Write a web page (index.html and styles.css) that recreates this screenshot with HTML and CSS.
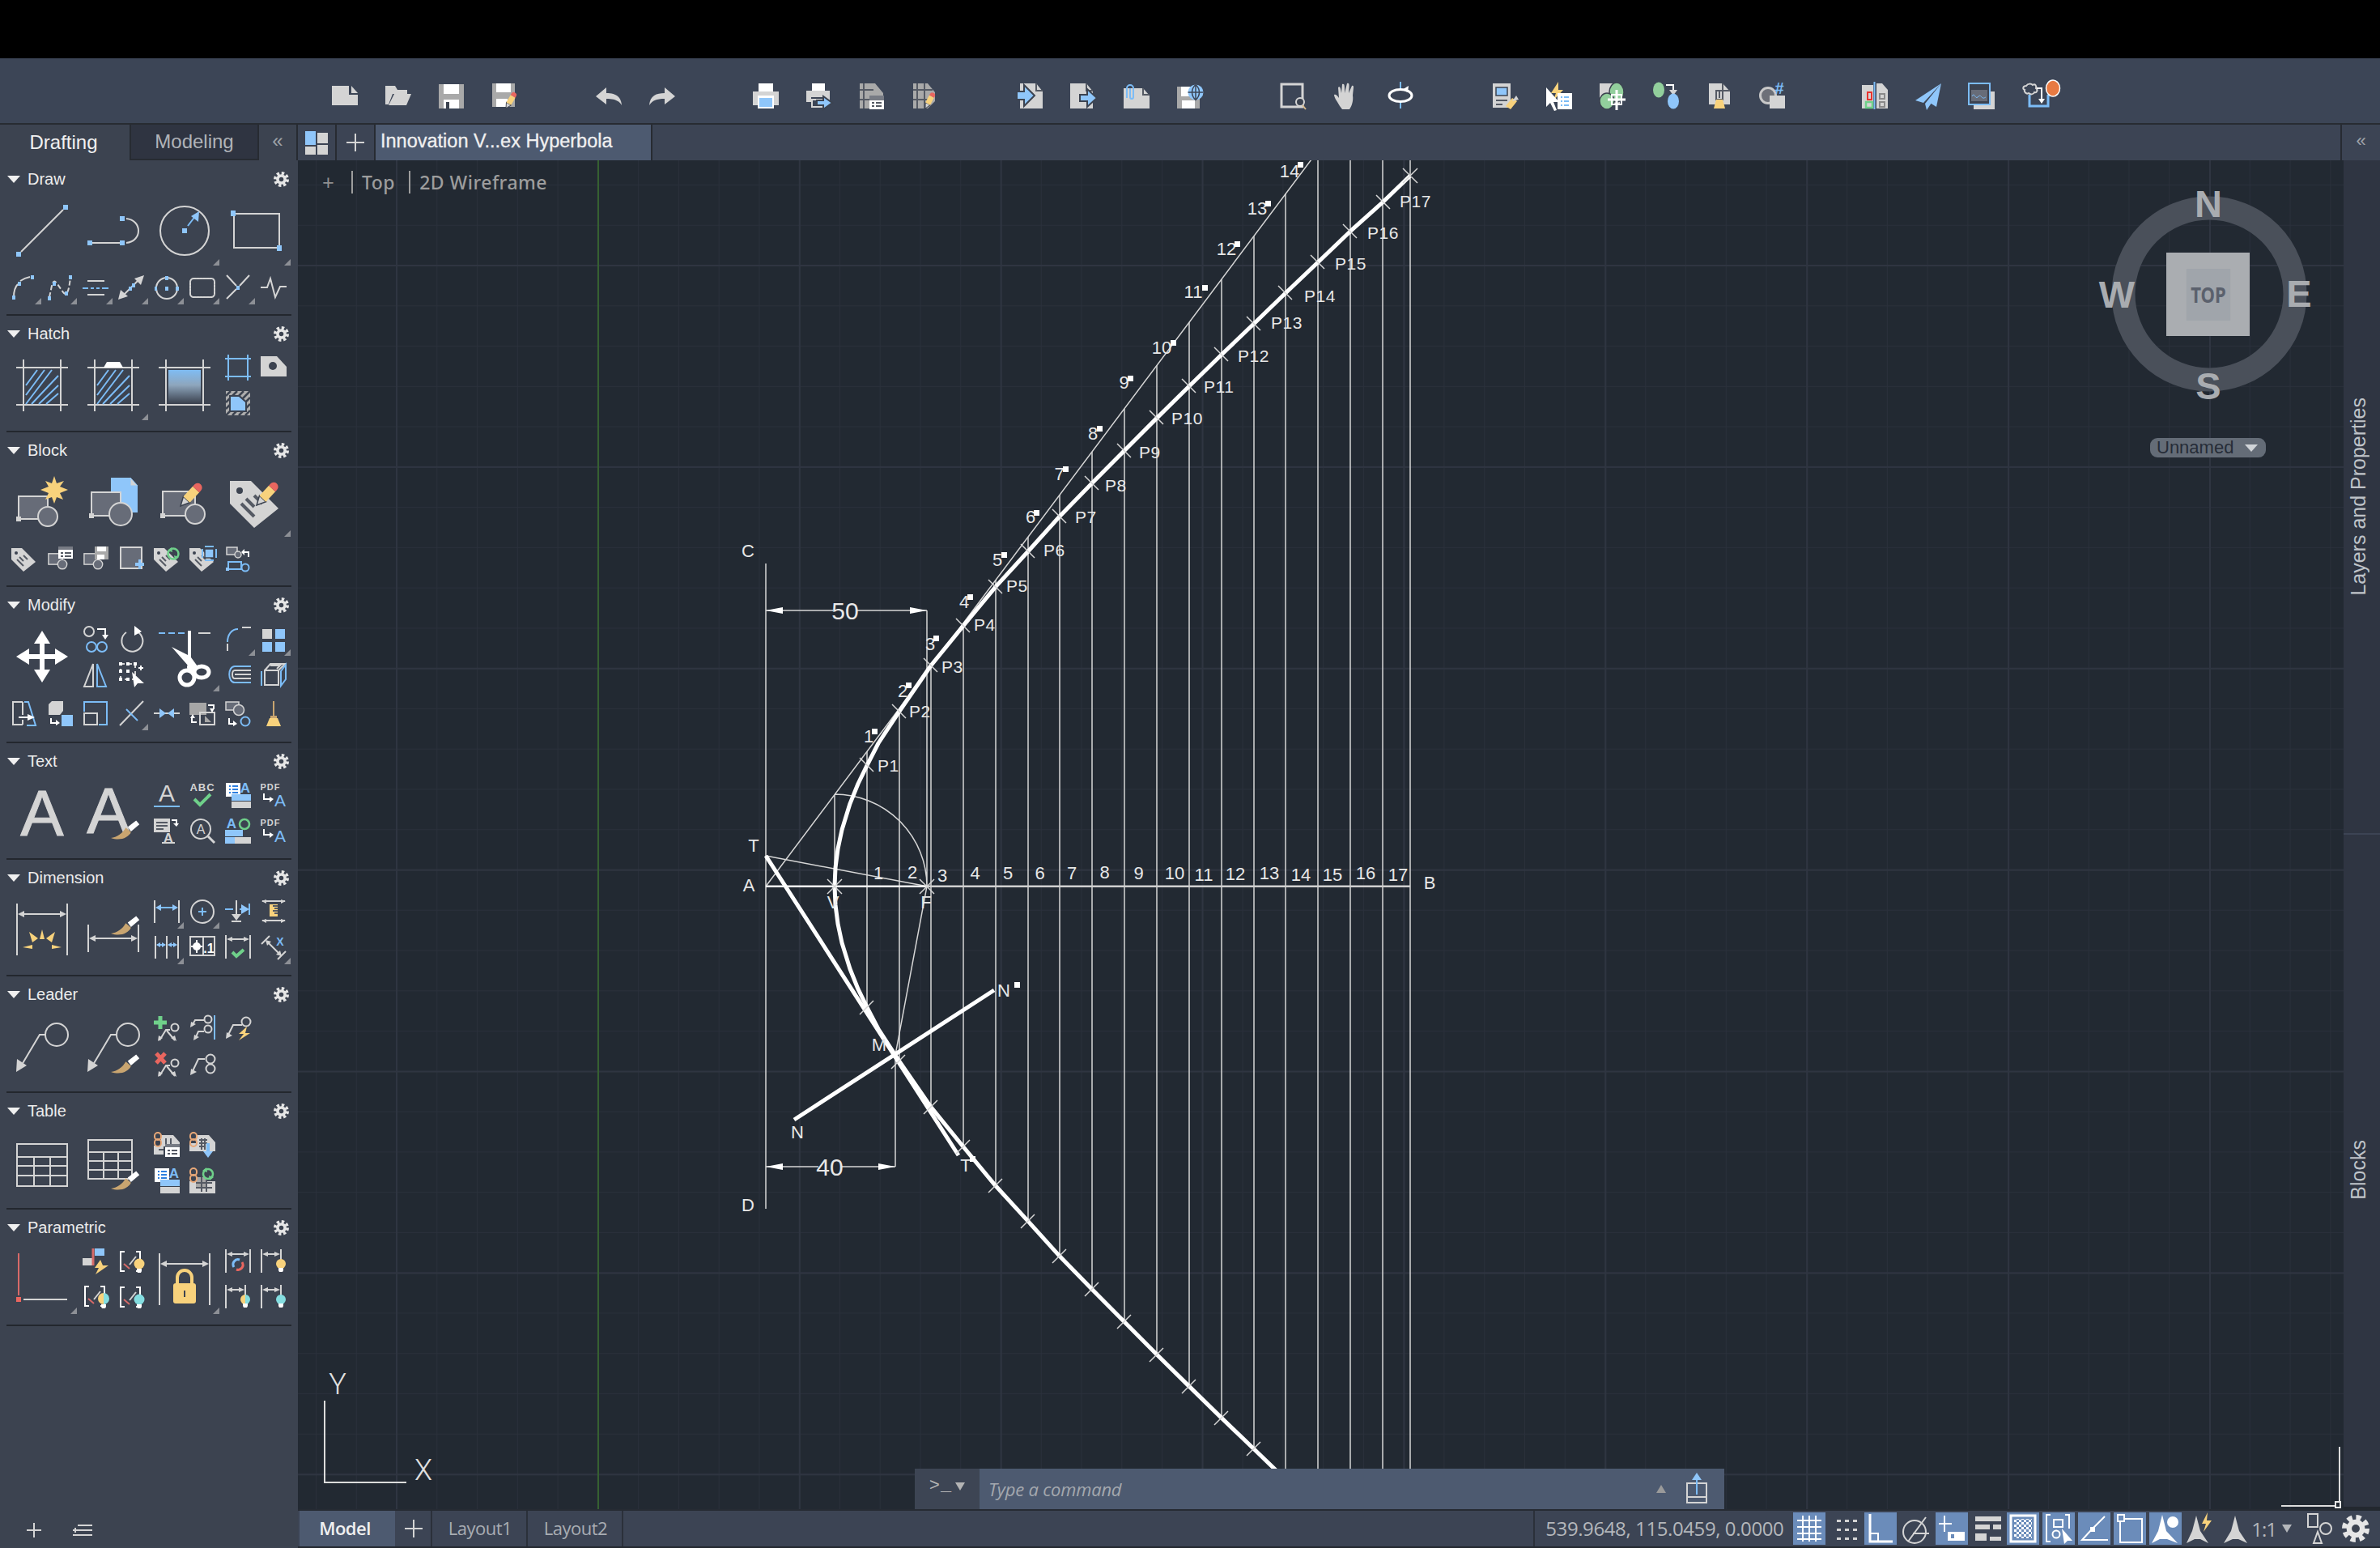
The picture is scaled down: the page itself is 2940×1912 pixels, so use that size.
FILE: index.html
```html
<!DOCTYPE html>
<html lang="en">
<head>
<meta charset="utf-8">
<title>Innovation Vertex Hyperbola</title>
<link rel="stylesheet" href="styles.css">
</head>
<body>
<svg class="defs" aria-hidden="true">
  <defs>
    <linearGradient id="grad" x1="0" y1="0" x2="0" y2="1"><stop offset="0" stop-color="#7fbcf3"/><stop offset=".45" stop-color="#8ea6bd"/><stop offset="1" stop-color="#3c4350"/></linearGradient>
    <pattern id="chk" width="6" height="6" patternUnits="userSpaceOnUse"><rect width="6" height="6" fill="#6b8cba"/><rect width="3" height="3" fill="#fff"/><rect x="3" y="3" width="3" height="3" fill="#fff"/></pattern>
    <g id="gear"><circle cx="9" cy="9" r="6" class="gf"/><circle cx="9" cy="9" r="7" class="gt"/><circle cx="9" cy="9" r="2.6" class="fd"/></g>
    <g id="pencil"><polygon points="0,0 11,-5.5 11,5.5" class="f kd"/><rect x="11" y="-5.5" width="17" height="11" class="fy"/><path d="M28-5.5h3a5.500 5.500 0 0 1 0 11h-3z" class="fr"/></g>
    <g id="brush"><path d="M0 0C9-1 18-7 23-16l8 7C27 0 14 5 0 0z" class="ft"/><path d="M26-17L39-27l5 6L31-10z" class="fw"/></g>
    <g id="tag"><polygon points="0,3 13,3 30,20 15,32 0,17" class="f"/><circle cx="6" cy="9" r="2" class="fd"/><path d="M10 14l5 5M7 17l8 8M15 12l5 5" class="sd"/></g>
    <g id="blk"><rect x="2" y="4" width="18" height="14" class="fm s1"/><circle cx="20" cy="18" r="6" class="fm s1"/></g>
    <g id="cstr"><path d="M8 4H3V28H8M22 4H27V28H22" class="sw"/><path d="M7 19L14 25" class="srd"/><path d="M14 20L22 10" class="s"/></g>
    <g id="chain"><rect x="1" y="1" width="8" height="9" rx="4" class="sor"/><rect x="1" y="9" width="8" height="9" rx="4" class="sor"/></g>
  </defs>
</svg>

<div class="topbar"></div>

<header class="toolbar">
  <div class="tgroup g1">
    <svg class="ti" viewBox="0 0 32 32"><path d="M0 5H21V16H32V29H0z" class="f"/><path d="M24 5l8 9h-8z" class="f"/></svg>
    <svg class="ti" viewBox="0 0 32 32"><path d="M0 5h12l3 5h12v5H9L4 28H0z" class="f"/><path d="M11 15h21l-6 14H4z" class="f"/></svg>
    <svg class="ti" viewBox="0 0 32 32"><path d="M0 3H31V33H0z" class="fg2"/><rect x="6" y="3" width="19" height="12" class="fw"/><rect x="6" y="22" width="19" height="11" class="fw"/><rect x="9" y="25" width="4" height="8" class="fd"/></svg>
    <svg class="ti" viewBox="0 0 32 32"><path d="M0 2H28V31H0z" class="fg2"/><rect x="5" y="2" width="18" height="11" class="fw"/><rect x="5" y="21" width="14" height="10" class="fw"/><use href="#pencil" transform="translate(17 33) rotate(-60) scale(.62)"/></svg>
  </div>
  <div class="tgroup g2">
    <svg class="ti" viewBox="0 0 32 32"><path d="M0 18L13 7v7c10 0 18 3 19 15-4-6-9-8-19-8v7z" class="f"/></svg>
    <svg class="ti" viewBox="0 0 32 32"><path d="M32 18L19 7v7C9 14 1 17 0 29c4-6 9-8 19-8v7z" class="f"/></svg>
  </div>
  <div class="tgroup g3">
    <svg class="ti" viewBox="0 0 32 32"><rect x="7" y="2" width="18" height="11" class="fw"/><path d="M0 12H32V29H26V22H6V29H0z" class="f"/><rect x="6" y="17" width="20" height="16" class="fw"/><rect x="8" y="20" width="16" height="11" class="fb"/></svg>
    <svg class="ti" viewBox="0 0 32 32"><rect x="7" y="2" width="16" height="9" class="fw"/><path d="M0 11H29V25H23V19H6V25H0z" class="f"/><rect x="7" y="22" width="12" height="9" class="s"/><path d="M13 23h8v-5l11 8-11 8v-5h-8z" class="fb kp"/></svg>
    <svg class="ti" viewBox="0 0 32 32"><path d="M0 2H19L29 14V20H17V33H0z" class="fg2"/><path d="M5 2V33M0 10H17M0 22H17" class="sd"/><rect x="12" y="17" width="18" height="16" class="fg3"/><rect x="12" y="23" width="18" height="11" class="fw"/><path d="M15 26h3M20 26h7M15 30h3M20 30h7" class="sd"/></svg>
    <svg class="ti" viewBox="0 0 32 32"><path d="M0 2H18L27 13V24L18 33H0z" class="fg2"/><path d="M5 2V33M0 10H24M0 22H20M14 2V33" class="sd"/><use href="#pencil" transform="translate(15 33) rotate(-62) scale(.6)"/></svg>
  </div>
  <div class="tgroup g4">
    <svg class="ti" viewBox="0 0 32 32"><path d="M4 2H24L32 12V33H4z" class="f"/><path d="M24 2v9h8" class="sd"/><path d="M0 12H9V4L22 17L9 30V22H0z" class="fb kp"/></svg>
    <svg class="ti" viewBox="0 0 32 32"><path d="M0 2H20L28 12V33H0z" class="f"/><path d="M20 2v9h8" class="sd"/><path d="M12 16H21V9L33 20L21 31V24H12z" class="fb kp"/></svg>
    <svg class="ti" viewBox="0 0 32 32"><path d="M0 8H24L32 17V33H0z" class="f"/><path d="M24 8v8h8" class="sd"/><path d="M4 20V8a4 4 0 0 1 8 0v11a2 2 0 0 1-4 0V8" class="sb"/></svg>
    <svg class="ti" viewBox="0 0 32 32"><path d="M0 6H28V33H0z" class="fg2"/><rect x="5" y="6" width="12" height="12" class="fw"/><rect x="6" y="23" width="16" height="10" class="fw"/><circle cx="23" cy="13" r="9.500" class="fb"/><path d="M23 3.500V22.500M13.500 13H32.500M23 3.500C17 9 17 17 23 22.500C29 17 29 9 23 3.500" class="sd1"/></svg>
  </div>
  <div class="tgroup g5">
    <svg class="ti" viewBox="0 0 32 32"><rect x="1" y="3" width="26" height="28" class="s3"/><circle cx="24" cy="25" r="5" class="s fd"/><path d="M27 29l4 5" class="sy"/></svg>
    <svg class="ti" viewBox="0 0 32 32"><path d="M7 30C5 26 0 20 0 16c2-1 4 1 6 4L5 7c2-2 3 0 4 7L10 3c3-1 3 1 3 11l3-12c3-1 3 1 2 12l4-9c3-1 2 2 1 12 1 6-1 13-4 17H10z" class="f"/></svg>
    <svg class="ti" viewBox="0 0 32 32"><path d="M16 0V9M16 24V33" class="sb"/><ellipse cx="16" cy="17" rx="14" ry="7.500" class="s3w"/><polygon points="18,10 26,5 25,13" class="fw"/></svg>
  </div>
  <div class="tgroup g6">
    <svg class="ti" viewBox="0 0 32 32"><rect x="0" y="2" width="22" height="30" class="f"/><rect x="4" y="7" width="14" height="10" class="fb kd"/><path d="M4 23h14M4 28h8" class="sd"/><path d="M16 30l8-10 6 4-8 10z" class="fy"/><path d="M24 24l5-7 3 5z" class="f"/></svg>
    <svg class="ti" viewBox="0 0 32 32"><path d="M15 0L6 14h6l-3 9 12-13h-6z" class="fy"/><path d="M0 7L16 25H9l4 10-3 1-5-10-5 5z" class="fw"/><rect x="14" y="14" width="18" height="20" class="fw"/><path d="M18 19h2M22 19h6M18 24h2M22 24h6M18 29h2M22 29h6" class="sb"/></svg>
    <svg class="ti" viewBox="0 0 32 32"><rect x="0" y="2" width="25" height="26" class="f"/><ellipse cx="21" cy="13" rx="9" ry="12" class="gg kd"/><ellipse cx="9" cy="24" rx="9" ry="10" class="gg kd"/><path d="M21 10V35M10 22H32" class="sw3"/><rect x="15" y="16" width="12" height="12" class="sw"/></svg>
    <svg class="ti" viewBox="0 0 32 32"><ellipse cx="7" cy="10" rx="7" ry="9.500" class="gg"/><path d="M16 4H25V11" class="sw"/><polygon points="20,10 30,10 25,17" class="f"/><ellipse cx="25" cy="24" rx="7" ry="9.500" class="fb"/></svg>
    <svg class="ti" viewBox="0 0 26 32"><path d="M0 2H17L26 12V28H0z" class="f"/><path d="M17 2v9h9" class="sd"/><path d="M9 11H17V22H9z" class="sd"/><path d="M13 10V20" class="sd"/><polygon points="9,22 17,22 20,33 6,33" class="fy"/></svg>
    <svg class="ti" viewBox="0 0 32 32"><circle cx="10" cy="17" r="9.500" class="s3g"/><rect x="12" y="17" width="19" height="16" class="f"/><text x="24" y="15" class="hash">#</text></svg>
  </div>
  <div class="tgroup g7">
    <svg class="ti" viewBox="0 0 32 32"><path d="M0 4H14V33H0z" class="f"/><path d="M18 2H25L32 10V33H18z" class="f"/><rect x="7" y="13" width="5" height="9" class="srb"/><rect x="5" y="25" width="8" height="7" class="sgn"/><rect x="22" y="15" width="6" height="6" class="s0"/><rect x="22" y="25" width="6" height="6" class="s0"/><path d="M15.500 0V34" class="sb"/></svg>
    <svg class="ti" viewBox="0 0 32 32"><path d="M32 2L0 23l10 3z" class="fb"/><path d="M32 2L12 27l2 8 6-9z" class="fb"/><path d="M32 2L18 26l8 5z" class="fb"/></svg>
    <svg class="ti" viewBox="0 0 32 32"><rect x="6" y="12" width="26" height="22" class="f"/><rect x="0" y="2" width="26" height="26" class="fd1 sb"/><rect x="3" y="10" width="20" height="14" class="fm"/><path d="M4 18c3-6 4 4 7 1s3-2 5 0 3 1 5 0" class="sb1"/></svg>
    <svg class="ti wide" viewBox="0 0 48 36"><path d="M5 7c2-3 6-3 8-1 3-2 5 1 4 4 3 2 1 6-2 5-1 3-5 3-7 1-3 2-6-2-5-4-3-1-2-5 2-5z" class="s"/><path d="M18 10H24V26" class="sw"/><polygon points="20,23 28,23 24,29" class="fw"/><path d="M9 18V32H32V18" class="sb3"/><ellipse cx="38" cy="10" rx="8.500" ry="10" class="orng"/></svg>
  </div>
</header>

<div class="main">
  <aside class="palette">
    <div class="pal-tabs">
      <div class="ptab on">Drafting</div>
      <div class="ptab off">Modeling</div>
      <div class="ptab chev">«</div>
    </div>
    <div class="pal-body">

      <section class="sec tall">
        <div class="head"><span class="tri"></span><span class="ttl">Draw</span><svg class="gear" viewBox="0 0 18 18"><use href="#gear"/></svg></div>
        <div class="grid">
          <div class="c L"><svg viewBox="0 0 64 64"><path d="M6 58L58 6" class="s"/><rect x="0" y="58" width="6" height="6" class="fb"/><rect x="58" y="0" width="6" height="6" class="fb"/></svg></div>
          <div class="c L"><svg viewBox="0 0 64 64"><path d="M6 47H40" class="s"/><path d="M48 17C68 19 68 45 48 47" class="s"/><rect x="0" y="44" width="6" height="6" class="fb"/><rect x="40" y="44" width="6" height="6" class="fb"/><rect x="40" y="14" width="6" height="6" class="fb"/></svg></div>
          <div class="c L fly"><svg viewBox="0 0 64 64"><circle cx="32" cy="32" r="30" class="s"/><rect x="29" y="29" width="6" height="6" class="fb"/><path d="M36 26L46 13" class="sb"/><polygon points="50,8 49,21 40,14" class="fb"/></svg></div>
          <div class="c L fly"><svg viewBox="0 0 64 64"><path d="M5 11H61V53H5z" class="s"/><rect x="1" y="7" width="6" height="7" class="fb"/><rect x="58" y="50" width="6" height="7" class="fb"/></svg></div>
        </div>
        <div class="grid one">
          <div class="c fly"><svg viewBox="0 0 32 32"><path d="M3 28C3 22 4 16 8 12M11 8C14 6 18 4 23 3" class="s"/><rect x="1" y="26" width="4" height="5" class="fb"/><rect x="8" y="9" width="4" height="5" class="fb"/><rect x="24" y="1" width="4" height="5" class="fb"/></svg></div>
          <div class="c fly"><svg viewBox="0 0 32 32"><path d="M3 28L6 14C8 6 10 8 13 12L20 22C25 28 27 20 29 4" class="s dash"/><rect x="1" y="27" width="4" height="5" class="fb"/><rect x="7" y="9" width="4" height="5" class="fb"/><rect x="22" y="21" width="4" height="5" class="fb"/><rect x="27" y="1" width="4" height="5" class="fb"/></svg></div>
          <div class="c fly"><svg viewBox="0 0 32 32"><path d="M6 8H27M6 25H27" class="s"/><path d="M0 17H7M10 17H14M17 17H21M24 17H32" class="sb"/></svg></div>
          <div class="c fly"><svg viewBox="0 0 32 32"><path d="M6 26L26 6" class="s"/><polygon points="0,31 3,19 12,27" class="f"/><polygon points="32,1 20,5 28,13" class="f"/><rect x="13" y="15" width="4" height="5" class="fb"/><rect x="17" y="11" width="4" height="5" class="fb"/></svg></div>
          <div class="c fly"><svg viewBox="0 0 32 32"><circle cx="16" cy="17" r="13" class="s"/><rect x="14" y="2" width="4" height="5" class="fb"/><rect x="14" y="15" width="4" height="5" class="fb"/><rect x="27" y="15" width="4" height="5" class="fb"/><rect x="1" y="15" width="3" height="5" class="fb"/></svg></div>
          <div class="c fly"><svg viewBox="0 0 32 32"><rect x="1" y="5" width="30" height="23" rx="4" class="s dot"/></svg></div>
          <div class="c fly"><svg viewBox="0 0 32 32"><path d="M2 1L14 14M30 1L18 14M14 18L2 30" class="s"/><rect x="14" y="14" width="4" height="5" class="fb"/></svg></div>
          <div class="c"><svg viewBox="0 0 32 32"><path d="M0 16H8L12 5L18 28L24 15H32" class="s"/></svg></div>
        </div>
      </section>

      <section class="sec short">
        <div class="head"><span class="tri"></span><span class="ttl">Hatch</span><svg class="gear" viewBox="0 0 18 18"><use href="#gear"/></svg></div>
        <div class="grid">
          <div class="c L"><svg viewBox="0 0 64 64"><path d="M0 10H64M0 56H64M9 0V64M55 0V64" class="s"/><path d="M12 32L26 13M12 44L35 13M12 55L44 13M19 55L52 20M28 55L52 32M37 55L52 42" class="sb"/></svg></div>
          <div class="c L fly"><svg viewBox="0 0 64 64"><path d="M0 10H64M0 56H64M9 0V64M55 0V64" class="s"/><path d="M12 32L26 13M12 44L35 13M12 55L44 13M19 55L52 20M28 55L52 32M37 55L52 42" class="sb"/><path d="M20 10L24 3H40L44 10z" class="fw"/></svg></div>
          <div class="c L"><svg viewBox="0 0 64 64"><rect x="12" y="13" width="40" height="41" fill="url(#grad)"/><path d="M0 10H64M0 56H64M9 0V64M55 0V64" class="s"/></svg></div>
          <div class="c"><svg viewBox="0 0 32 32"><path d="M0 5H32M0 27H32M4 0V32M28 0V32" class="sb"/></svg></div>
          <div class="c"><svg viewBox="0 0 32 32"><path d="M0 2H20L32 15V27H0z" class="f"/><ellipse cx="15" cy="14" rx="5" ry="5" class="fd"/></svg></div>
          <div class="c"><svg viewBox="0 0 32 32"><rect x="1" y="1" width="30" height="30" class="hatch"/><path d="M1 7L7 1M1 15L15 1M1 23L23 1M1 31L31 1M9 31L31 9M17 31L31 17M25 31L31 25" class="sstripe"/><path d="M5 6H18L27 14V27H5z" class="fd"/><path d="M7 8H17L25 15V25H7z" class="fb"/></svg></div>
        </div>
      </section>

      <section class="sec tall">
        <div class="head"><span class="tri"></span><span class="ttl">Block</span><svg class="gear" viewBox="0 0 18 18"><use href="#gear"/></svg></div>
        <div class="grid">
          <div class="c L"><svg viewBox="0 0 64 64"><rect x="3" y="25" width="36" height="28" class="fm s"/><circle cx="39" cy="50" r="12" class="fm s"/><rect x="0" y="50" width="6" height="6" class="f"/><polygon points="47,0 50,9 59,6 54,13 64,17 54,21 58,29 50,26 47,34 44,26 36,29 40,21 30,17 40,13 36,6 44,9" class="fy"/></svg></div>
          <div class="c L"><svg viewBox="0 0 64 64"><path d="M29 2H53L62 12V45H29z" class="fb"/><path d="M53 2L62 12H53z" class="fw1 kb2"/><rect x="5" y="20" width="36" height="29" class="fm s"/><circle cx="41" cy="47" r="14" class="fm s"/><rect x="2" y="46" width="6" height="6" class="f"/></svg></div>
          <div class="c L"><svg viewBox="0 0 64 64"><rect x="5" y="19" width="40" height="30" class="fm s"/><circle cx="45" cy="47" r="12" class="fm s"/><rect x="2" y="46" width="6" height="6" class="f"/><use href="#pencil" transform="translate(27 37) rotate(-47) scale(1)"/></svg></div>
          <div class="c L fly"><svg viewBox="0 0 64 64"><use href="#tag" transform="scale(2)"/><use href="#pencil" transform="translate(33 36) rotate(-47)"/></svg></div>
        </div>
        <div class="grid one">
          <div class="c"><svg viewBox="0 0 32 32"><use href="#tag"/></svg></div>
          <div class="c"><svg viewBox="0 0 32 32"><use href="#blk" transform="translate(0 6) scale(.95)"/><rect x="14" y="1" width="18" height="15" class="fw"/><rect x="14" y="1" width="18" height="4" class="fg3"/><path d="M17 9h3M22 9h8M17 13h3M22 13h8" class="sd"/></svg></div>
          <div class="c"><svg viewBox="0 0 32 32"><use href="#blk" transform="translate(0 6) scale(.95)"/><rect x="15" y="1" width="17" height="16" class="fg2"/><rect x="18" y="1" width="11" height="6" class="fw"/><rect x="18" y="11" width="9" height="6" class="fw"/></svg></div>
          <div class="c"><svg viewBox="0 0 32 32"><rect x="3" y="2" width="26" height="26" class="fm s"/><path d="M24 21H28V17H31V21H35V25H31V29H28V25H24z" class="fb" transform="translate(-3 0)"/></svg></div>
          <div class="c"><svg viewBox="0 0 32 32"><use href="#tag"/><circle cx="24" cy="10" r="6.500" class="sgn"/><polygon points="17,6 22,2 23,8" class="fn"/><polygon points="31,14 26,18 25,12" class="fn"/></svg></div>
          <div class="c"><svg viewBox="0 0 32 32"><use href="#tag"/><rect x="19" y="4" width="11" height="11" class="fb kd"/><path d="M16 4V15M33 4V15M19 1H30M19 18H30" class="sb"/></svg></div>
          <div class="c"><svg viewBox="0 0 32 32"><path d="M2 2H15V11H2z" class="fm s1"/><circle cx="16" cy="11" r="4" class="fm s1"/><path d="M22 8H29V14" class="sw"/><polygon points="20,8 24,4 24,12" class="fw"/><path d="M4 20H20V29H4z" class="sb"/><circle cx="25" cy="27" r="4.500" class="sb"/><rect x="1" y="27" width="4" height="4" class="fb"/></svg></div>
        </div>
      </section>

      <section class="sec tall mod">
        <div class="head"><span class="tri"></span><span class="ttl">Modify</span><svg class="gear" viewBox="0 0 18 18"><use href="#gear"/></svg></div>
        <div class="grid">
          <div class="c L"><svg viewBox="0 0 64 64"><path d="M32 0L42 16H35V29H48V22L64 32L48 42V35H35V48H42L32 64L22 48H29V35H16V42L0 32L16 22V29H29V16H22z" class="fw"/></svg></div>
          <div class="c"><svg viewBox="0 0 32 32"><circle cx="8" cy="7" r="6" class="s"/><path d="M18 4H28V12" class="sw"/><polygon points="24,11 32,11 28,17" class="fw"/><circle cx="11" cy="26" r="6" class="sb"/><circle cx="24" cy="26" r="6" class="sb"/></svg></div>
          <div class="c"><svg viewBox="0 0 32 32"><path d="M10 8A13 13 0 1 0 20 6" class="s"/><polygon points="20,0 29,7 20,12" class="fw"/></svg></div>
          <div class="c L fly"><svg viewBox="0 0 64 64"><path d="M0 3H32" class="sb dash2"/><path d="M49 3H64" class="s"/><path d="M16 20L44 52 48 44 40 33 40 0 36 0 36 30z" class="fw"/><circle cx="39" cy="45" r="4" class="fw"/><circle cx="35" cy="58" r="9" class="sw5"/><ellipse cx="53" cy="51" rx="9" ry="7" class="sw5"/></svg></div>
          <div class="c fly"><svg viewBox="0 0 32 32"><path d="M3 31V22" class="s"/><path d="M3 20C3 11 8 4 16 4" class="sb"/><path d="M21 2H32" class="s"/></svg></div>
          <div class="c fly"><svg viewBox="0 0 32 32"><rect x="2" y="4" width="12" height="12" class="f"/><rect x="18" y="4" width="12" height="12" class="fb"/><rect x="2" y="20" width="12" height="12" class="fb"/><rect x="18" y="20" width="12" height="12" class="fb"/></svg></div>
          <div class="c"><svg viewBox="0 0 32 32"><path d="M13 3V31H2z" class="s"/><path d="M18 3V31H29z" class="sb"/></svg></div>
          <div class="c"><svg viewBox="0 0 32 32"><rect x="3" y="3" width="18" height="19" class="s dash3"/><rect x="1" y="1" width="4" height="4" class="fw"/><rect x="10" y="1" width="4" height="4" class="fw"/><rect x="19" y="1" width="4" height="4" class="fw"/><rect x="1" y="10" width="4" height="4" class="fw"/><rect x="10" y="10" width="4" height="4" class="fw"/><rect x="1" y="20" width="4" height="4" class="fw"/><rect x="10" y="20" width="4" height="4" class="fw"/><path d="M17 13L32 27H24L20 32z" class="fw"/><path d="M25 8H31M28 5V11" class="sw"/></svg></div>
          <div class="c"><svg viewBox="0 0 32 32"><path d="M32 6H12C3 6 3 26 12 26H32" class="sb"/><path d="M32 11H12C8 11 8 21 12 21H32M12 16H32" class="s"/></svg></div>
          <div class="c"><svg viewBox="0 0 32 32"><rect x="5" y="11" width="17" height="18" class="s"/><path d="M5 11L12 3H30L22 11" class="s"/><path d="M12 5H24L20 9" class="s"/><path d="M1 12V30" class="sb"/><path d="M25 12V30L31 22V4z" class="sb"/></svg></div>
        </div>
        <div class="grid one">
          <div class="c"><svg viewBox="0 0 32 32"><path d="M14 2H2V30H14" class="s"/><path d="M14 2V18M14 24V30" class="s"/><path d="M16 2H21L30 31H19" class="sb"/><path d="M9 21H22" class="sw"/><polygon points="20,17 29,21 20,25" class="fw"/></svg></div>
          <div class="c"><svg viewBox="0 0 32 32"><path d="M2 5L6 1H20V13L16 18H2z" class="f"/><path d="M5 22V28H12" class="sw"/><polygon points="11,24 16,28 11,31" class="fw"/><rect x="18" y="18" width="14" height="14" class="fb"/></svg></div>
          <div class="c"><svg viewBox="0 0 32 32"><path d="M2 14V2H30V30H20" class="sb"/><rect x="2" y="16" width="16" height="14" class="s"/></svg></div>
          <div class="c fly"><svg viewBox="0 0 32 32"><path d="M2 31L31 1" class="s"/><path d="M10 11L24 25" class="sb"/></svg></div>
          <div class="c"><svg viewBox="0 0 32 32"><path d="M0 16H32" class="s"/><polygon points="7,10 15,16 7,22" class="fb"/><polygon points="25,10 17,16 25,22" class="fb"/></svg></div>
          <div class="c"><svg viewBox="0 0 32 32"><rect x="0" y="3" width="21" height="15" class="fg4"/><rect x="13" y="15" width="18" height="15" class="s"/><polygon points="19,19 27,27 19,27" class="fg4"/><path d="M23 6H30V11" class="sw"/><polygon points="25,10 31,10 28,15" class="fw"/><path d="M9 27H3V21" class="sw"/><polygon points="1,22 7,22 4,17" class="fw"/></svg></div>
          <div class="c"><svg viewBox="0 0 32 32"><path d="M1 2H17V12H1z" class="fm s1"/><circle cx="17" cy="12" r="6.500" class="fm s1"/><path d="M5 22V29H12" class="sw"/><polygon points="10,25 15,29 10,32" class="fw"/><circle cx="25" cy="26" r="5.500" class="sb"/></svg></div>
          <div class="c"><svg viewBox="0 0 32 32"><rect x="15" y="1" width="2" height="19" class="ft"/><rect x="12" y="19" width="8" height="3" class="ft"/><polygon points="11,22 21,22 25,32 7,32" class="fy"/></svg></div>
        </div>
      </section>

      <section class="sec short">
        <div class="head"><span class="tri"></span><span class="ttl">Text</span><svg class="gear" viewBox="0 0 18 18"><use href="#gear"/></svg></div>
        <div class="grid">
          <div class="c L"><svg viewBox="0 0 64 64"><text x="32" y="60" class="bigA">A</text></svg></div>
          <div class="c L"><svg viewBox="0 0 64 64"><text x="26" y="57" class="bigA">A</text><use href="#brush" transform="translate(29 63) scale(.8)"/></svg></div>
          <div class="c"><svg viewBox="0 0 32 32"><text x="16" y="24" class="medA">A</text><path d="M0 30H32" class="sb"/></svg></div>
          <div class="c"><svg viewBox="0 0 32 32"><text x="16" y="11" class="abc">ABC</text><path d="M6 21L13 28L26 15" class="sgn4"/></svg></div>
          <div class="c"><svg viewBox="0 0 32 32"><rect x="1" y="1" width="18" height="17" class="fw"/><path d="M5 5h2M9 5h7M5 9h2M9 9h7M5 13h2M9 13h7" class="sblue"/><text x="25" y="13" class="smA bl">A</text><rect x="8" y="15" width="24" height="8" class="fb"/><rect x="8" y="24" width="24" height="8" class="f"/></svg></div>
          <div class="c"><svg viewBox="0 0 32 32"><text x="12" y="10" class="pdf">PDF</text><path d="M4 14V21H13" class="sw"/><polygon points="11,18 16,21 11,25" class="fw"/><text x="24" y="30" class="smA2 bl">A</text></svg></div>
          <div class="c"><svg viewBox="0 0 32 32"><rect x="0" y="1" width="20" height="17" class="f"/><path d="M3 6H17M3 10H17M3 14H12" class="sd"/><path d="M22 3H28V8" class="sw"/><polygon points="24,7 31,7 28,11" class="fw"/><text x="18" y="31" class="smA">A</text><path d="M10 31H26" class="s"/></svg></div>
          <div class="c"><svg viewBox="0 0 32 32"><circle cx="14" cy="14" r="12" class="s"/><text x="14" y="20" class="smA3">A</text><path d="M23 23L31 31" class="s3"/></svg></div>
          <div class="c"><svg viewBox="0 0 32 32"><text x="8" y="13" class="smA bl">A</text><circle cx="24" cy="8" r="6" class="sgn"/><rect x="0" y="15" width="22" height="8" class="fb"/><rect x="0" y="24" width="32" height="8" class="fb"/><rect x="12" y="24" width="20" height="8" class="f"/></svg></div>
          <div class="c"><svg viewBox="0 0 32 32"><text x="12" y="10" class="pdf">PDF</text><path d="M4 14V21H13" class="sw"/><polygon points="11,18 16,21 11,25" class="fw"/><text x="24" y="30" class="smA2 bl">A</text></svg></div>
        </div>
      </section>

      <section class="sec short">
        <div class="head"><span class="tri"></span><span class="ttl">Dimension</span><svg class="gear" viewBox="0 0 18 18"><use href="#gear"/></svg></div>
        <div class="grid">
          <div class="c L"><svg viewBox="0 0 64 64"><path d="M1 0V64M63 0V64M4 13H60" class="s"/><polygon points="2,13 10,9 10,17" class="f"/><polygon points="62,13 54,9 54,17" class="f"/><polygon points="32,32 35,44 29,44" class="fy"/><polygon points="16,35 27,43 20,48" class="fy"/><polygon points="48,35 37,43 44,48" class="fy"/><polygon points="8,54 20,51 20,56" class="fy"/><polygon points="56,54 44,51 44,56" class="fy"/></svg></div>
          <div class="c L"><svg viewBox="0 0 64 64"><path d="M1 26V60M63 26V60M4 43H60" class="s"/><polygon points="2,43 10,39 10,47" class="f"/><polygon points="62,43 54,39 54,47" class="f"/><use href="#brush" transform="translate(29 37) scale(.8)"/></svg></div>
          <div class="c fly"><svg viewBox="0 0 32 32"><path d="M1 2V30M31 2V30" class="s"/><path d="M4 11H28" class="sb"/><polygon points="2,11 9,7 9,15" class="fb"/><polygon points="30,11 23,7 23,15" class="fb"/></svg></div>
          <div class="c fly"><svg viewBox="0 0 32 32"><circle cx="16" cy="16" r="14" class="s"/><path d="M11 16H21M16 11V21" class="sb"/></svg></div>
          <div class="c"><svg viewBox="0 0 32 32"><path d="M0 13H10M30 6V20" class="sb"/><path d="M14 2V24M8 28H20" class="s"/><polygon points="8,19 20,19 14,27" class="f"/><path d="M18 13H24" class="sb"/><polygon points="20,7 30,13 20,19" class="fb"/></svg></div>
          <div class="c"><svg viewBox="0 0 32 32"><path d="M2 3H30M2 27H30" class="s"/><polygon points="1,3 7,1 7,6" class="f"/><polygon points="31,3 25,1 25,6" class="f"/><polygon points="1,27 7,25 7,30" class="f"/><polygon points="31,27 25,25 25,30" class="f"/><rect x="11" y="7" width="10" height="15" class="fy"/><path d="M15 9H21M17 12H21M15 15H21M17 18H21" class="sd"/></svg></div>
          <div class="c fly"><svg viewBox="0 0 32 32"><path d="M2 2V30M16 2V30M30 2V30" class="s"/><path d="M4 13H14M18 13H28" class="sb"/><polygon points="3,13 8,10 8,16" class="fb"/><polygon points="15,13 10,10 10,16" class="fb"/><polygon points="17,13 22,10 22,16" class="fb"/><polygon points="29,13 24,10 24,16" class="fb"/></svg></div>
          <div class="c"><svg viewBox="0 0 32 32"><rect x="1" y="3" width="30" height="23" class="s"/><path d="M17 3V26" class="s"/><circle cx="9" cy="15" r="5" class="fw"/><path d="M9 7V23M2 15H16" class="sw"/><text x="24" y="23" class="pt1">.1</text></svg></div>
          <div class="c"><svg viewBox="0 0 32 32"><path d="M1 1V30M31 1V30M4 6H28" class="s"/><polygon points="2,6 9,3 9,9" class="f"/><polygon points="30,6 23,3 23,9" class="f"/><path d="M9 22L14 27L23 19" class="sgn4"/></svg></div>
          <div class="c fly"><svg viewBox="0 0 32 32"><path d="M1 12L11 2M21 31L31 21M8 9L25 26" class="s"/><polygon points="6,7 13,9 8,14" class="f"/><polygon points="26,27 19,25 24,20" class="f"/><text x="24" y="14" class="xx">X</text></svg></div>
        </div>
      </section>

      <section class="sec short">
        <div class="head"><span class="tri"></span><span class="ttl">Leader</span><svg class="gear" viewBox="0 0 18 18"><use href="#gear"/></svg></div>
        <div class="grid">
          <div class="c L"><svg viewBox="0 0 64 64"><path d="M4 60L29 18H36" class="s"/><polygon points="0,64 1,48 13,56" class="f"/><ellipse cx="50" cy="18" rx="14" ry="14" class="s"/></svg></div>
          <div class="c L"><svg viewBox="0 0 64 64"><path d="M4 60L29 18H36" class="s"/><polygon points="0,64 1,48 13,56" class="f"/><ellipse cx="50" cy="18" rx="14" ry="14" class="s"/><use href="#brush" transform="translate(29 64) scale(.8)"/></svg></div>
          <div class="c"><svg viewBox="0 0 32 32"><path d="M8 1V17M0 9H16" class="sgn5"/><path d="M7 31L15 18H20M26 31L16 19" class="s"/><circle cx="26" cy="15" r="4.500" class="s"/><polygon points="5,32 6,25 11,28" class="f"/><polygon points="28,32 21,28 26,25" class="f"/></svg></div>
          <div class="c"><svg viewBox="0 0 32 32"><path d="M3 13L7 6H18M7 29L11 20H18" class="s"/><polygon points="1,15 2,8 8,11" class="f"/><polygon points="5,31 6,24 12,27" class="f"/><circle cx="23" cy="5" r="4.500" class="s"/><circle cx="23" cy="17" r="4.500" class="s"/><path d="M31 0V30" class="sb"/></svg></div>
          <div class="c"><svg viewBox="0 0 32 32"><path d="M3 26L10 12H21" class="s"/><polygon points="1,29 2,21 9,25" class="f"/><circle cx="26" cy="8" r="5.500" class="s"/><polygon points="27,14 17,23 23,23 17,31 31,22 25,22" class="fy"/></svg></div>
          <div class="c"></div>
          <div class="c"><svg viewBox="0 0 32 32"><path d="M3 3L14 15M14 3L3 15" class="srd5"/><path d="M7 31L15 18H20M26 31L16 19" class="s"/><circle cx="26" cy="15" r="4.500" class="s"/><polygon points="5,32 6,25 11,28" class="f"/><polygon points="28,32 21,28 26,25" class="f"/></svg></div>
          <div class="c"><svg viewBox="0 0 32 32"><path d="M3 27L11 10H19" class="s"/><polygon points="1,30 2,22 9,26" class="f"/><circle cx="26" cy="10" r="5.500" class="s"/><circle cx="26" cy="22" r="5.500" class="s"/></svg></div>
        </div>
      </section>

      <section class="sec short">
        <div class="head"><span class="tri"></span><span class="ttl">Table</span><svg class="gear" viewBox="0 0 18 18"><use href="#gear"/></svg></div>
        <div class="grid">
          <div class="c L"><svg viewBox="0 0 64 64"><rect x="1" y="9" width="62" height="52" class="s"/><path d="M1 25H63M1 36H63M1 48H63M22 25V61M42 25V61" class="s"/></svg></div>
          <div class="c L"><svg viewBox="0 0 64 64"><rect x="1" y="4" width="54" height="48" class="s"/><path d="M1 19H55M1 30H55M1 41H55M20 19V52M38 19V52" class="s"/><use href="#brush" transform="translate(29 64) scale(.8)"/></svg></div>
          <div class="c"><svg viewBox="0 0 32 32"><path d="M9 4H24L32 13V18H12V28H0V17H9z" class="f"/><path d="M6 22H12M15 8V16M21 8V16" class="sd"/><rect x="14" y="15" width="18" height="16" class="fw"/><rect x="14" y="15" width="18" height="4" class="fg3"/><path d="M17 23h3M22 23h7M17 27h3M22 27h7" class="sd"/><use href="#chain"/></svg></div>
          <div class="c"><svg viewBox="0 0 32 32"><path d="M8 4H24L32 13V24H0V14H8z" class="f"/><path d="M12 10H22M12 14H22M12 18H20M15 8V22M19 8V22" class="sd"/><use href="#chain"/><path d="M23 14V26" class="sblue3"/><polygon points="17,24 29,24 23,32" class="fb"/></svg></div>
          <div class="c"></div><div class="c"></div>
          <div class="c"><svg viewBox="0 0 32 32"><rect x="1" y="1" width="18" height="17" class="fw"/><path d="M5 5h2M9 5h7M5 9h2M9 9h7M5 13h2M9 13h7" class="sblue"/><text x="25" y="13" class="smA bl">A</text><rect x="8" y="15" width="24" height="8" class="fb"/><rect x="8" y="24" width="24" height="8" class="f"/></svg></div>
          <div class="c"><svg viewBox="0 0 32 32"><rect x="0" y="17" width="32" height="15" class="f"/><path d="M8 12H22V26H8z" class="fg4"/><path d="M8 19H28M8 25H28M15 12V30M21 12V30" class="sd"/><use href="#chain"/><circle cx="23" cy="8" r="6" class="sgn"/><polygon points="16,4 21,0 22,6" class="fn"/><polygon points="30,12 25,16 24,10" class="fn"/></svg></div>
        </div>
      </section>

      <section class="sec short">
        <div class="head"><span class="tri"></span><span class="ttl">Parametric</span><svg class="gear" viewBox="0 0 18 18"><use href="#gear"/></svg></div>
        <div class="grid">
          <div class="c L fly"><svg viewBox="0 0 64 64"><path d="M3 0V52" class="srd"/><rect x="0" y="54" width="6" height="6" class="fr"/><path d="M9 57H63" class="s"/></svg></div>
          <div class="c"><svg viewBox="0 0 32 32"><rect x="0" y="12" width="12" height="9" class="f"/><path d="M13 0V21" class="srd3"/><rect x="15" y="0" width="12" height="9" class="fb"/><polygon points="22,14 15,24 20,24 16,32 32,21 25,21" class="fy"/></svg></div>
          <div class="c"><svg viewBox="0 0 32 32"><use href="#cstr"/><circle cx="26" cy="19" r="6.500" class="fy"/><path d="M23 25h6v3l-1 2h-4l-1-2z" class="fw"/></svg></div>
          <div class="c L fly"><svg viewBox="0 0 64 64"><path d="M1 0V64M63 0V64M4 13H60" class="s"/><polygon points="2,13 10,9 10,17" class="f"/><polygon points="62,13 54,9 54,17" class="f"/><path d="M23 38V30a9 9 0 0 1 18 0V38" class="slock"/><rect x="18" y="37" width="28" height="25" rx="3" class="fy"/><rect x="31" y="46" width="2" height="8" class="fd"/></svg></div>
          <div class="c"><svg viewBox="0 0 32 32"><path d="M1 1V30M31 1V30M4 7H28" class="s"/><polygon points="2,7 9,4 9,10" class="f"/><polygon points="30,7 23,4 23,10" class="f"/><path d="M11 23A6 6 0 0 1 18 14" class="sb3"/><path d="M21 17A6 6 0 0 1 14 26" class="sred3"/></svg></div>
          <div class="c"><svg viewBox="0 0 32 32"><path d="M1 1V30M25 1V15M4 7H22" class="s"/><polygon points="2,7 9,4 9,10" class="f"/><polygon points="24,7 17,4 17,10" class="f"/><circle cx="25" cy="19" r="6" class="fy"/><path d="M22 24h6v3l-1 2h-4l-1-2z" class="fw"/></svg></div>
          <div class="c"><svg viewBox="0 0 32 32"><use href="#cstr" transform="translate(0 -1)"/><path d="M26 11A7 7 0 0 0 26 25z" class="fy"/><path d="M26 11A7 7 0 0 1 26 25z" class="fa"/><path d="M23 25h6v3l-1 2h-4l-1-2z" class="fw"/></svg></div>
          <div class="c"><svg viewBox="0 0 32 32"><use href="#cstr"/><circle cx="26" cy="19" r="6.500" class="fa"/><path d="M23 25h6v3l-1 2h-4l-1-2z" class="fw"/></svg></div>
          <div class="c"><svg viewBox="0 0 32 32"><path d="M1 1V30M25 1V15M4 7H22" class="s"/><polygon points="2,7 9,4 9,10" class="f"/><polygon points="24,7 17,4 17,10" class="f"/><path d="M25 13A6 6 0 0 0 25 25z" class="fy"/><path d="M25 13A6 6 0 0 1 25 25z" class="fa"/><path d="M22 24h6v3l-1 2h-4l-1-2z" class="fw"/></svg></div>
          <div class="c"><svg viewBox="0 0 32 32"><path d="M1 1V30M25 1V15M4 7H22" class="s"/><polygon points="2,7 9,4 9,10" class="f"/><polygon points="24,7 17,4 17,10" class="f"/><circle cx="25" cy="19" r="6" class="fa"/><path d="M22 24h6v3l-1 2h-4l-1-2z" class="fw"/></svg></div>
        </div>
      </section>
    </div>
    <div class="pal-foot">
      <svg class="foot1" viewBox="0 0 24 24"><path d="M12 3V21M3 12H21" class="s"/></svg>
      <svg class="foot2" viewBox="0 0 24 24"><path d="M6 6H24M0 12H24M0 18H24" class="s"/><path d="M3 9V15" class="s"/></svg>
    </div>
  </aside>

  <div class="work">
    <nav class="doc-tabs">
      <div class="dbtn"><svg viewBox="0 0 30 30"><rect x="1" y="1" width="13" height="17" class="fb"/><rect x="16" y="3" width="13" height="13" class="f"/><rect x="1" y="20" width="13" height="11" class="f"/><rect x="16" y="18" width="13" height="13" class="f"/></svg></div>
      <div class="dbtn"><svg viewBox="0 0 24 24"><path d="M12 1V23M1 12H23" class="s"/></svg></div>
      <div class="dtab">Innovation V...ex Hyperbola</div>
      <div class="dfill"></div>
      <div class="dend">«</div>
    </nav>

    <div class="view-row">
      <main class="canvas">
        <svg class="draw" viewBox="368 198 2527 1668" preserveAspectRatio="none">
          <path d="M739 198V1866" class="axis"/>
          <path d="M946 696V1493M1071 928V1244M1111 875V1311M1150 823V1367M1190 770V1417M1230 716V1465M1270 663V1508M1309 611V1552M1349 558V1593M1389 505V1633M1429 451V1673M1469 398V1712M1509 345V1751M1549 292V1790M1588 239V1827M1628 198V1865M1668 198V1865M1708 198V1865M1742 198V1865" class="thin"/>
          <path d="M946 1094.700L1620 197M946 1057L1145 1094.700M1145 1094.700L1106 1303M1031 981V1094.700M1031 981A114 114 0 0 1 1145 1094.700M1145 754V1094.700M1106 1303V1441" class="thin"/>
          <path d="M946 754H1029M1059 754H1145M946 1441H1011M1039 1441H1106" class="thin"/>
          <polygon points="946,754 967,750 967,758" class="wh"/><polygon points="1145,754 1124,750 1124,758" class="wh"/>
          <polygon points="946,1441 967,1437 967,1445" class="wh"/><polygon points="1106,1441 1085,1437 1085,1445" class="wh"/>
          <path d="M946 1094.700H1145" class="ax1"/><path d="M1145 1094.700H1742" class="ax2"/>
          <path d="M1742 217L1708.600 249.300L1668 285.700L1628 324L1588 362L1549 399.700L1509 438L1469 477L1429 516.400L1389 556.600L1349 596.800L1309 637.800L1270 681L1230 724.600L1190 772.900L1150 822L1111 878.500L1085 918L1071 945.400L1060 968L1050 992.600L1040 1025L1035 1048.400L1032 1071.700L1031 1094.700L1032 1117.700L1035 1141L1040 1164.400L1050 1196.800L1060 1221.700L1071 1244L1085 1271L1111 1311L1150 1367.400L1190 1416.500L1230 1464.800L1270 1508.400L1309 1551.600L1349 1592.600L1389 1632.800L1429 1673L1469 1712.400L1509 1751.400L1549 1789.700L1588 1827.400L1628 1865" class="thick"/>
          <path d="M946 1057L1184 1427M981 1383L1228 1223" class="thick"/>
          <path d="M1733 208l18 18M1751 208l-18 18M1700 241l17 17M1659 277l17 17M1619 315l17 17M1579 353l17 17M1540 391l17 17M1500 429l17 17M1460 468l17 17M1420 507l17 17M1380 548l17 17M1340 588l17 17M1300 629l17 17M1261 672l17 17M1221 716l17 17M1181 764l17 17M1141 813l17 17M1102 870l17 17M1062 936l17 17M1022 1086l18 18M1040 1086l-18 18M1136 1086l18 18M1154 1086l-18 18M1062 1253l17-17M1101 1320l17-17M1141 1376l17-17M1181 1425l17-17M1221 1473l17-17M1261 1517l17-17M1300 1560l17-17M1340 1601l17-17M1380 1641l17-17M1420 1682l17-17M1460 1721l17-17M1500 1760l17-17M1540 1798l17-17" class="thin"/>
          <g class="lab">
            <text x="924" y="688">C</text><text x="931" y="1052">T</text><text x="925" y="1101">A</text><text x="924" y="1496">D</text><text x="1766" y="1098">B</text>
            <text x="1029" y="1122">V</text><text x="1144" y="1122">F</text>
            <text x="1085" y="1086">1</text><text x="1127" y="1085">2</text><text x="1164" y="1089">3</text><text x="1204.500" y="1086">4</text><text x="1245" y="1086">5</text><text x="1284.500" y="1086">6</text><text x="1324" y="1086">7</text><text x="1364.500" y="1085">8</text><text x="1406.600" y="1086">9</text><text x="1451" y="1086">10</text><text x="1487" y="1088">11</text><text x="1526" y="1087">12</text><text x="1568" y="1086">13</text><text x="1607" y="1088">14</text><text x="1646" y="1088">15</text><text x="1687" y="1086">16</text><text x="1727" y="1088">17</text>
            <text x="1073" y="917">1</text><text x="1115" y="861">2</text><text x="1149" y="803">3</text><text x="1191" y="751">4</text><text x="1232" y="699">5</text><text x="1273" y="646">6</text><text x="1308.500" y="593">7</text><text x="1350" y="543">8</text><text x="1388.500" y="480">9</text><text x="1435" y="437">10</text><text x="1474" y="368">11</text><text x="1515" y="315">12</text><text x="1553" y="265">13</text><text x="1593" y="219">14</text>
            <text x="1086" y="1298">M</text><text x="985" y="1406">N</text><text x="1240" y="1231">N</text><text x="1193" y="1447">T</text>
          </g>
          <g class="lab st">
            <text x="1084" y="953">P1</text><text x="1123" y="886">P2</text><text x="1163" y="831">P3</text><text x="1203" y="779">P4</text><text x="1243" y="731">P5</text><text x="1289" y="687">P6</text><text x="1328" y="646">P7</text><text x="1365" y="607">P8</text><text x="1407" y="566">P9</text><text x="1447" y="524">P10</text><text x="1487" y="485">P11</text><text x="1529" y="447">P12</text><text x="1570" y="406">P13</text><text x="1611" y="373">P14</text><text x="1649" y="333">P15</text><text x="1689" y="295">P16</text><text x="1729" y="256">P17</text>
          </g>
          <g class="dimt"><text x="1044" y="765">50</text><text x="1025" y="1452">40</text></g>
          <path d="M1077 900h7v7h-7zM1119 843h7v7h-7zM1153 785h7v7h-7zM1195 734h7v7h-7zM1237 682h7v7h-7zM1277 630h7v7h-7zM1313 576h7v7h-7zM1355 526h7v7h-7zM1393 464h7v7h-7zM1446 420h7v7h-7zM1485 352h7v7h-7zM1525 298h7v7h-7zM1563 248h7v7h-7zM1603 200h7v7h-7zM1253 1213h7v7h-7zM1198 1428h7v7h-7z" class="wh"/>
          <path d="M401 1730V1831H502" class="ucs"/>
          <text x="417" y="1722" class="ucst">Y</text><text x="523" y="1828" class="ucst">X</text>
          <path d="M2890 1787V1858M2818 1860H2884" class="ucs"/>
          <rect x="2885" y="1855" width="6" height="7" class="corner"/>
        </svg>

        <div class="cmode">
          <span class="vp-plus">+</span><span class="vp-bar"></span><span class="vp">Top</span><span class="vp-bar"></span><span class="vp">2D Wireframe</span>
        </div>

        <div class="cube">
          <svg class="ring" viewBox="0 0 250 250"><circle cx="125" cy="125" r="106" class="ringc"/></svg>
          <span class="dir n">N</span><span class="dir s1t">S</span><span class="dir w">W</span><span class="dir e">E</span>
          <div class="face"><div class="facein">TOP</div></div>
        </div>
        <div class="wcs"><span>Unnamed</span><i class="wtri"></i></div>

        <div class="cmd">
          <div class="cprompt"><span class="cgt">&gt;_</span><i class="ctri"></i></div>
          <div class="cinput"><span class="ctext">Type a command</span><i class="cup"></i>
            <svg class="cshare" viewBox="0 0 26 38"><rect x="1" y="13" width="24" height="24" class="s"/><path d="M1 30H25" class="s"/><path d="M13 8V27" class="sb"/><polygon points="13,0 19,9 7,9" class="fb"/></svg>
          </div>
        </div>
      </main>
      <aside class="side">
        <div class="vtab top"><span>Layers and Properties</span></div>
        <div class="vtab bot"><span>Blocks</span></div>
      </aside>
    </div>

    <footer class="status">
      <div class="ltab on">Model</div>
      <div class="ltab plus"><svg viewBox="0 0 24 24"><path d="M12 1V23M1 12H23" class="s"/></svg></div>
      <div class="ltab">Layout1</div>
      <div class="ltab">Layout2</div>
      <div class="sfill"></div>
      <div class="coords">539.9648, 115.0459, 0.0000</div>
      <div class="sicons">
        <div class="sb-btn on"><svg viewBox="0 0 40 40"><path d="M12 4V36M20 4V36M28 4V36M5 10H35M5 18H35M5 26H35M5 33H35" class="sw"/></svg></div>
        <div class="sb-btn"><svg viewBox="0 0 40 40"><path d="M10 9h5v3h-5zM20 9h5v3h-5zM30 9h5v3h-5zM10 20h5v3h-5zM20 20h5v3h-5zM30 20h5v3h-5zM10 31h5v3h-5zM20 31h5v3h-5zM30 31h5v3h-5z" class="f"/></svg></div>
        <div class="sb-btn on"><svg viewBox="0 0 40 40"><path d="M7 2V36H35" class="sw3"/><path d="M7 26H17V36" class="sw"/></svg></div>
        <div class="sb-btn"><svg viewBox="0 0 40 40"><circle cx="18" cy="24" r="14" class="s"/><path d="M10 36L32 6M16 26H36" class="s"/></svg></div>
        <div class="sb-btn on"><svg viewBox="0 0 40 40"><path d="M11 4V24M4 14H20" class="sw"/><rect x="15" y="24" width="21" height="11" class="fw"/><rect x="19" y="27" width="4" height="5" class="fbtn"/></svg></div>
        <div class="sb-btn"><svg viewBox="0 0 40 40"><rect x="5" y="5" width="32" height="6" class="f"/><rect x="5" y="15" width="18" height="6" class="f"/><rect x="27" y="15" width="10" height="6" class="f"/><rect x="5" y="26" width="14" height="9" class="f"/><rect x="23" y="30" width="14" height="5" class="f"/></svg></div>
        <div class="sb-btn on"><svg viewBox="0 0 40 40"><rect x="5" y="4" width="30" height="32" class="s3w"/><rect x="9" y="8" width="22" height="24" fill="url(#chk)"/></svg></div>
        <div class="sb-btn on"><svg viewBox="0 0 40 40"><path d="M10 3H5V36H10" class="sw"/><path d="M28 3H33V20" class="sw"/><rect x="14" y="9" width="11" height="9" class="sw"/><circle cx="17" cy="27" r="4.500" class="sw"/><path d="M24 20L37 35H31L27 39z" class="fw"/></svg></div>
        <div class="sb-btn on"><svg viewBox="0 0 40 40"><path d="M33 5L19 19M16 22L5 34H37" class="sw"/><rect x="15" y="18" width="6" height="6" class="fw"/></svg></div>
        <div class="sb-btn on"><svg viewBox="0 0 40 40"><rect x="8" y="8" width="27" height="29" class="sw"/><rect x="5" y="3" width="8" height="8" class="sw fbtn"/></svg></div>
        <div class="sb-btn on"><svg viewBox="0 0 40 40"><circle cx="29" cy="12" r="7" class="fw"/><path d="M16 3L21 23L35 38L22 33H13L3 38L11 23z" class="fw"/></svg></div>
        <div class="sb-btn"><svg viewBox="0 0 40 40"><path d="M14 4L19 23L29 38L19 33H12L2 38L9 23z" class="f"/><polygon points="28,0 21,14 26,14 23,24 33,10 27,10" class="fy"/></svg></div>
        <div class="sb-btn"><svg viewBox="0 0 40 40"><path d="M18 4L23 23L33 38L22 33H15L4 38L13 23z" class="f"/></svg></div>
      </div>
      <div class="scale">1:1</div><i class="stri"></i>
      <svg class="swork" viewBox="0 0 32 40"><rect x="2" y="2" width="12" height="16" class="s"/><circle cx="24" cy="20" r="7" class="s"/><path d="M13 38L9 38L14 24L19 38z" class="s"/></svg>
      <svg class="sgear" viewBox="0 0 18 18"><use href="#gear"/></svg>
    </footer>
  </div>
</div>
</body>
</html>
```

FILE: styles.css
```css
* { box-sizing: border-box; }
html, body { margin: 0; padding: 0; width: 2940px; height: 1912px; overflow: hidden; background: #23282f; font-family: "Liberation Sans", Arial, sans-serif; }
.defs { position: absolute; width: 0; height: 0; }

.topbar { height: 72px; background: #000; }
.toolbar { height: 82px; background: #3c4556; border-bottom: 2px solid #272b32; display: flex; align-items: center; padding-left: 410px; padding-top: 9px; }
.tgroup { display: flex; gap: 34px; align-items: center; }
.g2 { margin-left: 96px; } .g3 { margin-left: 96px; } .g4 { margin-left: 96px; } .g5 { margin-left: 96px; } .g6 { margin-left: 98px; } .g7 { margin-left: 94px; }
.ti { width: 32px; height: 32px; overflow: visible; display: block; }
.ti.wide { width: 48px; height: 36px; }

.main { display: flex; height: 1758px; }
.palette { width: 368px; background: #3c4350; display: flex; flex-direction: column; flex-shrink: 0; }
.pal-tabs { height: 44px; display: flex; background: #3c4350; }
.ptab { font-size: 24px; display: flex; align-items: center; justify-content: center; height: 44px; }
.ptab.on { width: 160px; color: #f0f0f0; padding-right: 3px; }
.ptab.off { width: 160px; background: #2f3441; color: #b0b3b8; border-bottom: 2px solid #272b32; border-left: 2px solid #272b32; border-right: 2px solid #272b32; }
.ptab.chev { flex: 1; color: #9ea2a8; font-size: 24px; padding-bottom: 4px; border-right: 2px solid #272b32; }
.pal-body { padding-top: 1px; flex: 1; }
.sec { position: relative; padding-top: 0; }
.sec::after { content: ""; position: absolute; left: 8px; right: 8px; bottom: 0; height: 2px; background: #23272e; }
.tall { height: 191px; } .short { height: 144px; } .mod { height: 193px; }
.head { height: 42px; padding-top: 2px; display: flex; align-items: center; position: relative; }
.tri { width: 0; height: 0; border-left: 8px solid transparent; border-right: 8px solid transparent; border-top: 9px solid #f0f0f0; margin-left: 9px; margin-right: 9px; }
.ttl { font-size: 20px; color: #ececec; }
.gear { width: 19px; height: 19px; margin-left: auto; margin-right: 11px; }
.grid { display: grid; grid-template-columns: repeat(8, 44px); grid-auto-rows: 44px; padding-left: 8px; }
.grid.one { margin-top: 4px; }
.c { position: relative; display: flex; align-items: center; justify-content: center; }
.c svg { width: 32px; height: 32px; display: block; overflow: visible; }
.c.L { grid-column: span 2; grid-row: span 2; }
.c.L svg { width: 64px; height: 64px; }
.fly::after { content: ""; position: absolute; right: 1px; bottom: 1px; width: 8px; height: 8px; background: #8d9096; clip-path: polygon(100% 0, 100% 100%, 0 100%); }
.pal-foot { height: 44px; display: flex; align-items: center; padding-left: 30px; gap: 36px; margin-top: auto; }
.foot1 { width: 24px; height: 24px; }
.foot2 { width: 24px; height: 24px; }

/* icon paint */
.s { fill: none; stroke: #d4d4d4; stroke-width: 2; }
.s1 { stroke: #d4d4d4; stroke-width: 1.500; }
.s0 { fill: none; stroke: #8a8a8a; stroke-width: 2; }
.s3 { fill: none; stroke: #d4d4d4; stroke-width: 3; }
.s3w { fill: none; stroke: #fff; stroke-width: 3; }
.s3g { fill: #6d7078; stroke: #c8c8c8; stroke-width: 3; }
.sb { fill: none; stroke: #7cbcf6; stroke-width: 2; }
.sb1 { fill: none; stroke: #7cbcf6; stroke-width: 1; }
.sb3 { fill: none; stroke: #7cbcf6; stroke-width: 3; }
.sw { fill: none; stroke: #fff; stroke-width: 2; }
.sw3 { fill: none; stroke: #fff; stroke-width: 3; }
.sw5 { fill: none; stroke: #fff; stroke-width: 5; }
.sd { fill: none; stroke: #555a64; stroke-width: 2; }
.sd1 { fill: none; stroke: #3c4556; stroke-width: 1.500; }
.sy { fill: none; stroke: #d8b98a; stroke-width: 2; }
.sor { fill: none; stroke: #e8a878; stroke-width: 2; }
.srd { fill: none; stroke: #d76a68; stroke-width: 2; }
.srd3 { fill: none; stroke: #d76a68; stroke-width: 3; }
.sred3 { fill: none; stroke: #e9665f; stroke-width: 3; }
.srd5 { fill: none; stroke: #e9665f; stroke-width: 5; }
.srb { fill: none; stroke: #e8332f; stroke-width: 2; }
.sgn { fill: none; stroke: #6fd08a; stroke-width: 2.500; }
.sgn4 { fill: none; stroke: #6fd08a; stroke-width: 4; }
.sgn5 { fill: none; stroke: #6fd08a; stroke-width: 5; }
.sblue { fill: none; stroke: #2d7fe0; stroke-width: 2; }
.sblue3 { fill: none; stroke: #7cbcf6; stroke-width: 4; }
.slock { fill: none; stroke: #f8d27c; stroke-width: 4; }
.sstripe { fill: none; stroke: #3c4350; stroke-width: 2.500; }
.dash { stroke-dasharray: 6 3; }
.dash2 { stroke-dasharray: 8 4; }
.dash3 { stroke-dasharray: 5 4; }
.dot { stroke-dasharray: 3 1; stroke-linecap: round; }
.f { fill: #d4d4d4; }
.fb { fill: #8fc6fa; }
.fw { fill: #fff; }
.fw1 { fill: #d4d4d4; }
.fy { fill: #f8d27c; }
.fr { fill: #e9665f; }
.fn { fill: #6fd08a; }
.ft { fill: #c9a570; }
.fa { fill: #84dde0; }
.fd { fill: #3c4350; }
.fd1 { fill: #3c4350; }
.fm { fill: #676c78; }
.fg2 { fill: #a9a9a9; }
.fg3 { fill: #777b84; }
.fg4 { fill: #a6a6a6; }
.gg { fill: #92cf9c; }
.kd { stroke: #3c4350; stroke-width: 1.500; }
.kb2 { stroke: #8fc6fa; stroke-width: 1; }
.kp { stroke: #3c4350; stroke-width: 2; }
.gf { fill: #e6e6e6; }
.gt { fill: none; stroke: #e6e6e6; stroke-width: 4; stroke-dasharray: 3.100 2.400; }
.hatch { fill: #aeaeae; }
.orng { fill: #e77a42; stroke: #fff; stroke-width: 1.500; }
.fbtn { fill: #6b8cba; }
.bigA { font-family: "Liberation Sans", sans-serif; font-size: 80px; fill: #d4d4d4; stroke: #d4d4d4; stroke-width: 1; text-anchor: middle; }
.medA { font-family: "Liberation Sans", sans-serif; font-size: 30px; fill: #d4d4d4; text-anchor: middle; }
.abc { font-family: "Liberation Sans", sans-serif; font-size: 13px; font-weight: 700; fill: #d4d4d4; text-anchor: middle; letter-spacing: 1px; }
.smA { font-family: "Liberation Sans", sans-serif; font-size: 17px; font-weight: 700; fill: #d4d4d4; text-anchor: middle; }
.smA2 { font-family: "Liberation Sans", sans-serif; font-size: 21px; text-anchor: middle; }
.smA3 { font-family: "Liberation Sans", sans-serif; font-size: 16px; fill: #d4d4d4; text-anchor: middle; }
.smA.bl, .smA2.bl { fill: #7cbcf6; }
.pdf { font-family: "Liberation Sans", sans-serif; font-size: 11px; font-weight: 700; fill: #d4d4d4; text-anchor: middle; letter-spacing: 1px; }
.pt1 { font-family: "Liberation Sans", sans-serif; font-size: 16px; font-weight: 700; fill: #fff; text-anchor: middle; }
.xx { font-family: "Liberation Sans", sans-serif; font-size: 14px; font-weight: 700; fill: #7cbcf6; text-anchor: middle; }
.hash { font-family: "Liberation Sans", sans-serif; font-size: 20px; font-weight: 700; fill: #7cbcf6; text-anchor: middle; }

.work { flex: 1; display: flex; flex-direction: column; min-width: 0; }
.doc-tabs { height: 44px; display: flex; gap: 2px; background: #272b32; }
.dbtn { width: 46px; background: #3c4454; display: flex; align-items: center; justify-content: center; }
.dbtn svg { width: 30px; height: 30px; }
.dbtn + .dbtn svg { width: 24px; height: 24px; }
.dtab { width: 340px; background: #4d5a70; color: #f0f0f0; font-size: 23.500px; display: flex; align-items: center; padding-left: 6px; padding-bottom: 3px; -webkit-text-stroke: .3px #f0f0f0; white-space: nowrap; }
.dfill { flex: 1; background: #3c4454; }
.dend { width: 47px; background: #3c4454; color: #9ea2a8; font-size: 22px; display: flex; align-items: center; justify-content: center; padding-bottom: 4px; }

.view-row { height: 1668px; display: flex; }
.canvas { position: relative; width: 2527px; overflow: hidden; background-color: #222932;
  background-image:
    linear-gradient(to right, #2f3541 2px, transparent 2px),
    linear-gradient(to bottom, #2f3541 2px, transparent 2px),
    linear-gradient(to right, #2a303b 1px, transparent 1px),
    linear-gradient(to bottom, #2a303b 1px, transparent 1px);
  background-size: 248.900px 248.900px, 248.900px 248.900px, 49.780px 49.780px, 49.780px 49.780px;
  background-position: 121px 0, 0 129px, 22px 0, 0 30px;
  border-bottom: 2px solid #262b33;
}
.draw { position: absolute; left: 0; top: 0; width: 2527px; height: 1668px; }
.axis { stroke: #3a6f2c; stroke-width: 1.500; fill: none; }
.thin { stroke: #d6d6d6; stroke-width: 1.500; fill: none; }
.ax1 { stroke: #f2f2f2; stroke-width: 2.500; fill: none; }
.ax2 { stroke: #cfcfcf; stroke-width: 2.500; fill: none; }
.thick { stroke: #fff; stroke-width: 5; fill: none; stroke-linejoin: round; }
.wh { fill: #fff; }
.lab text { font-family: "Liberation Sans", sans-serif; font-size: 22px; fill: #e8e8e8; text-anchor: middle; }
.lab.st text { text-anchor: start; font-size: 21px; letter-spacing: .5px; }
.dimt text { font-family: "Liberation Sans", sans-serif; font-size: 30px; fill: #e8e8e8; text-anchor: middle; }
.ucs { stroke: #dcdcdc; stroke-width: 2; fill: none; }
.corner { fill: #222932; stroke: #e8e8e8; stroke-width: 2; }
.ucst { font-family: Roboto, sans-serif; font-weight: 300; font-size: 36px; fill: #e0e0e0; text-anchor: middle; }

.cmode { position: absolute; left: 30px; top: 13px; display: flex; align-items: center; height: 28px; color: #9d9d9d; font-family: "Noto Sans", sans-serif; font-size: 23px; font-weight: 500; }
.vp-plus { font-size: 26px; width: 36px; font-weight: 400; color: #8f8f8f; }
.vp-bar { width: 2px; height: 28px; background: #9d9d9d; margin-right: 11px; }
.vp { margin-right: 17px; letter-spacing: .5px; }

.cube { position: absolute; left: 2236px; top: 40px; width: 250px; height: 250px; }
.ring { position: absolute; left: 0; top: 0; width: 250px; height: 250px; }
.ringc { fill: none; stroke: #4a505a; stroke-width: 29; }
.dir { position: absolute; font-family: "Liberation Sans", sans-serif; font-weight: 700; font-size: 47px; line-height: 1; color: #a9acb0; width: 60px; text-align: center; margin: -24px 0 0 -30px; }
.n { left: 124px; top: 14px; } .s1t { left: 124px; top: 239px; } .w { left: 11px; top: 126px; } .e { left: 236px; top: 125px; }
.face { position: absolute; left: 72px; top: 74px; width: 103px; height: 103px; background: #aaadb1; display: flex; align-items: center; justify-content: center; }
.facein { width: 64px; height: 64px; background: #a0a5ab; color: #5b616d; font-family: "Noto Sans", sans-serif; font-weight: 700; font-size: 26px; display: flex; align-items: center; justify-content: center; transform: scaleX(.85); }
.wcs { position: absolute; left: 2288px; top: 343px; width: 143px; height: 24px; background: #646c77; border-radius: 9px; color: #262c37; font-size: 22px; display: flex; align-items: center; padding-left: 8px; }
.wtri { width: 0; height: 0; border-left: 8px solid transparent; border-right: 8px solid transparent; border-top: 9px solid #d0d4d8; margin-left: 14px; }

.cmd { position: absolute; left: 762px; top: 1616px; width: 1000px; height: 50px; display: flex; }
.cprompt { width: 80px; background: #3d4554; display: flex; align-items: center; justify-content: center; color: #b4b4b4; font-size: 22px; gap: 4px; }
.cgt { font-family: "Liberation Mono", monospace; font-size: 22px; letter-spacing: 1px; padding-bottom: 8px; }
.ctri { width: 0; height: 0; border-left: 6px solid transparent; border-right: 6px solid transparent; border-top: 10px solid #b4b4b4; margin-bottom: 6px; }
.cinput { flex: 1; background: #4d5a70; display: flex; align-items: center; padding-left: 11px; padding-right: 21px; }
.ctext { font-family: "Open Sans", sans-serif; font-style: italic; font-size: 22px; color: #a4a8ae; letter-spacing: -.2px; }
.cup { margin-left: auto; margin-right: 25px; width: 0; height: 0; border-left: 6px solid transparent; border-right: 6px solid transparent; border-bottom: 10px solid #9a9a9a; }
.cshare { width: 26px; height: 38px; display: block; margin-bottom: 2px; }

.side { width: 45px; background: #2f3542; display: flex; flex-direction: column; margin-bottom: 5px; }
.vtab { display: flex; align-items: flex-start; justify-content: center; color: #bfc3c8; font-size: 25px; padding-right: 8px; }
.vtab span { writing-mode: vertical-rl; transform: rotate(180deg); white-space: nowrap; }
.vtab.top { height: 833px; padding-top: 293px; border-bottom: 2px solid #3c4454; }
.vtab.bot { flex: 1; padding-top: 377px; }

.status { height: 44px; margin-bottom: 2px; background: #3c4454; display: flex; align-items: center; padding-right: 13px; }
.ltab { height: 44px; width: 116px; margin-left: 2px; background: #3c4454; border-right: 2px solid #2b303a; color: #a9adb3; font-family: "Open Sans", sans-serif; font-size: 22px; display: flex; align-items: center; justify-content: center; letter-spacing: -.5px; padding-bottom: 2px; }
.ltab.on { width: 118px; background: #4d5a70; color: #f0f0f0; font-weight: 600; border-right: 0; padding-right: 6px; }
.ltab.plus { width: 44px; padding: 0; }
.ltab.plus svg { width: 24px; height: 24px; }
.sfill { flex: 1; height: 44px; border-right: 2px solid #2b303a; }
.coords { width: 319px; padding-left: 13px; color: #b4b7bb; font-family: "Open Sans", sans-serif; font-size: 24px; white-space: nowrap; letter-spacing: -.4px; padding-bottom: 2px; }
.sicons { display: flex; gap: 4px; }
.sb-btn { width: 40px; height: 40px; display: flex; align-items: center; justify-content: center; }
.sb-btn.on { background: #6b8cba; }
.sb-btn svg { width: 40px; height: 40px; display: block; }
.scale { color: #b4b7bb; font-family: "Open Sans", sans-serif; font-size: 24px; margin-left: -2px; letter-spacing: -1px; }
.stri { width: 0; height: 0; border-left: 6px solid transparent; border-right: 6px solid transparent; border-top: 10px solid #b4b7bb; margin-left: 7px; }
.swork { width: 32px; height: 40px; margin-left: 18px; }
.sgear { width: 34px; height: 34px; margin-left: 12px; }
```
